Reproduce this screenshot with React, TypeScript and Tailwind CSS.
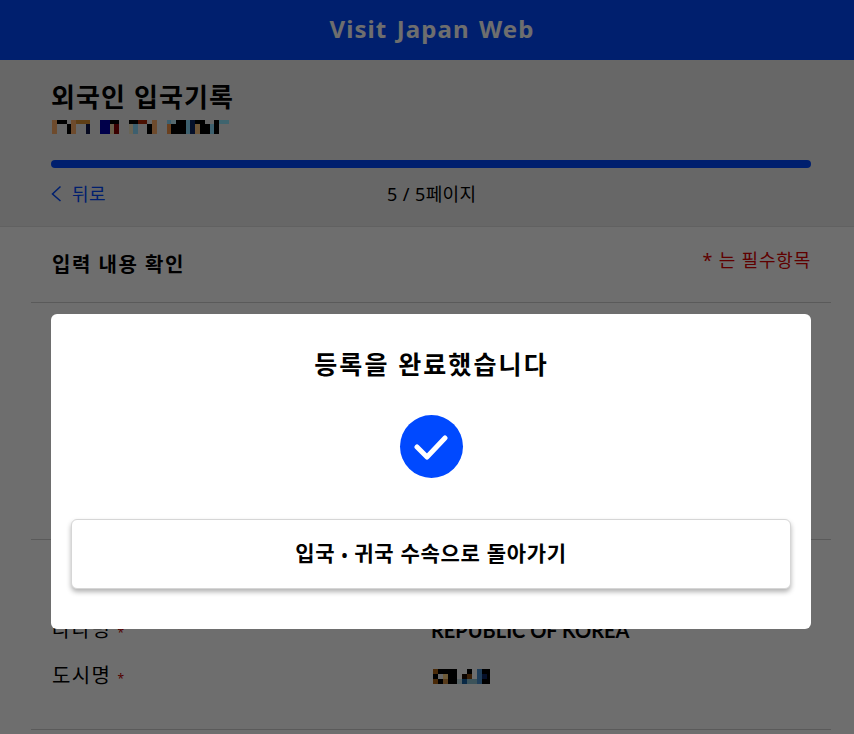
const KR = "font-['Noto_Sans','Noto_Sans_CJK_KR',sans-serif]"

// x, w, y, h, colour of each block in a blurred-out value
type Cell = [number, number, number, number, string]

const nameCells: Cell[] = [
  [0, 5, 0, 14, '#ffae68'],
  [5, 10, 0, 4, '#000000'],
  [15, 4, 4, 10, '#000000'],
  [19, 5, 0, 14, '#ffae68'],
  [24, 14, 0, 4, '#dd9331'],
  [34, 4, 4, 10, '#0e174a'],
  [48, 10, 0, 14, '#0000ac'],
  [58, 9, 0, 4, '#000000'],
  [58, 4, 4, 10, '#f4dcae'],
  [62, 5, 4, 10, '#870000'],
  [77, 9, 0, 4, '#000000'],
  [77, 4, 4, 10, '#f4e8c6'],
  [81, 5, 4, 10, '#8ddcff'],
  [86, 9, 0, 4, '#ac2300'],
  [95, 5, 4, 10, '#000000'],
  [100, 5, 0, 14, '#ffae68'],
  [115, 4, 0, 4, '#8ddcff'],
  [115, 4, 4, 10, '#f69549'],
  [119, 15, 4, 10, '#000000'],
  [119, 5, 0, 4, '#c5f4ff'],
  [124, 10, 0, 4, '#000000'],
  [134, 4, 0, 14, '#8ddfff'],
  [138, 5, 0, 14, '#0e2562'],
  [143, 5, 4, 10, '#ffc580'],
  [143, 10, 0, 4, '#000000'],
  [148, 10, 4, 10, '#000000'],
  [158, 4, 4, 10, '#8ddfff'],
  [162, 5, 0, 14, '#000000'],
  [167, 10, 0, 4, '#92e7ff'],
]

const cityCells: Cell[] = [
  [0, 5, 0, 5, '#ac6213'],
  [5, 10, 0, 5, '#000000'],
  [15, 9, 0, 15, '#000000'],
  [0, 5, 5, 5, '#000000'],
  [5, 5, 5, 5, '#eeeeee'],
  [10, 5, 5, 5, '#ffd180'],
  [0, 5, 10, 5, '#ac6213'],
  [5, 5, 10, 5, '#000000'],
  [10, 5, 10, 5, '#c98a40'],
  [24, 5, 10, 5, '#c5e0e8'],
  [29, 5, 5, 5, '#1a0a00'],
  [34, 5, 0, 5, '#000000'],
  [34, 5, 5, 5, '#874a13'],
  [29, 5, 10, 5, '#1760a0'],
  [34, 5, 10, 5, '#8cc0d0'],
  [39, 5, 10, 5, '#8cc0d0'],
  [44, 5, 0, 15, '#4a90d0'],
  [49, 5, 0, 5, '#000000'],
  [49, 5, 5, 5, '#0c2562'],
  [49, 5, 10, 5, '#000000'],
  [54, 3, 0, 15, '#000000'],
]

const Blur = ({ cells, w, h }: { cells: Cell[]; w: number; h: number }) => (
  <svg width={w} height={h} viewBox={`0 0 ${w} ${h}`} shapeRendering="crispEdges" className="block">
    {cells.map(([x, width, y, height, fill], i) => (
      <rect key={i} x={x} y={y} width={width} height={height} fill={fill} />
    ))}
  </svg>
)

const Page = () => (
  <div className="h-[734px] overflow-hidden bg-white">
    <header className="h-[60px] pb-[3px] pl-[10px] flex items-center justify-center bg-[#0049ff]">
      <span className="text-2xl font-bold tracking-[1.1px] [word-spacing:2px] text-white font-['Noto_Sans',sans-serif]">
        Visit Japan Web
      </span>
    </header>

    <div className="h-[167px] bg-[#eeeeee] border-b border-[#e2e2e2] pl-[51px] pr-[43px] pt-[19px]">
      <h1 className="text-[26px] leading-[36px] tracking-[1.1px] font-bold text-black">외국인 입국기록</h1>
      <div className="mt-[5px] ml-[1px]">
        <Blur cells={nameCells} w={177} h={14} />
      </div>
      <div className="mt-[26px] h-2 rounded-full bg-[#0049ff]" />
      <div className="relative mt-[12px] flex items-center h-[28px]">
        <div className="flex items-center gap-[10px] text-[#0049ff] text-lg tracking-[0.5px]">
          <svg width="11" height="18" viewBox="0 0 11 18" fill="none" stroke="currentColor" strokeWidth="1.5">
            <path d="M9.5 1.5 L1.5 9 L9.5 16" />
          </svg>
          <span>뒤로</span>
        </div>
        <span className="absolute left-[336px] text-lg tracking-[0.4px] text-black">5 / 5페이지</span>
      </div>
    </div>

    <div className="pl-[31px] pr-[23px]">
      <div className="h-[76px] border-b border-[#d0d0d0] px-[20px] flex justify-between">
        <span className="ml-[1px] mt-[23px] text-xl leading-[30px] tracking-[1.5px] font-bold text-black">입력 내용 확인</span>
        <span className="mt-[18px] text-lg leading-[30px] tracking-[0.8px] text-[#dd0000]">* 는 필수항목</span>
      </div>
      <div className="h-[237px] border-b border-[#d0d0d0]" />
      <div className="h-[190px] border-b border-[#d0d0d0] px-[20px] pt-[67px]">
        <div className="flex h-[46px] items-center">
          <span className="w-[380px] pl-[1px] text-xl tracking-[1.3px] text-black">
            나라명 <span className="text-xs text-[#c00000]">*</span>
          </span>
          <span className="text-xl font-bold text-black font-['Lato',sans-serif]">REPUBLIC OF KOREA</span>
        </div>
        <div className="flex h-[46px] items-center">
          <span className="w-[380px] pl-[1px] text-xl tracking-[1.3px] text-black">
            도시명 <span className="text-xs text-[#c00000]">*</span>
          </span>
          <div className="ml-[2px]">
            <Blur cells={cityCells} w={57} h={15} />
          </div>
        </div>
      </div>
    </div>
  </div>
)

const DoneDialog = () => (
  <div className="absolute inset-0 bg-black/[0.57] pl-[51px] pr-[43px] pt-[314px]">
    <div className="h-[315px] rounded-md bg-white px-5 flex flex-col items-center">
      <h2 className="mt-[32px] pl-[1px] text-[25px] leading-[36px] tracking-[2.1px] font-bold text-black">등록을 완료했습니다</h2>
      <div className="mt-[33px] w-[63px] h-[63px] rounded-full bg-[#0049ff] flex items-center justify-center">
        <svg width="34" height="26" viewBox="0 0 34 26" fill="none" stroke="white" strokeWidth="5" strokeLinecap="round" strokeLinejoin="round">
          <path d="M3 13 L13 23 L31 4" />
        </svg>
      </div>
      <button className="mt-[41px] w-full h-[70px] rounded-md bg-white border border-[#d6d6d6] shadow-[0_3px_5px_rgba(0,0,0,0.3)] text-[21px] tracking-[0.7px] font-bold text-black">
        입국 <span className="text-[16px]">•</span> 귀국 수속으로 돌아가기
      </button>
    </div>
  </div>
)

export default function App() {
  return (
    <div className={`relative h-[734px] overflow-hidden ${KR}`}>
      <Page />
      <DoneDialog />
    </div>
  )
}
